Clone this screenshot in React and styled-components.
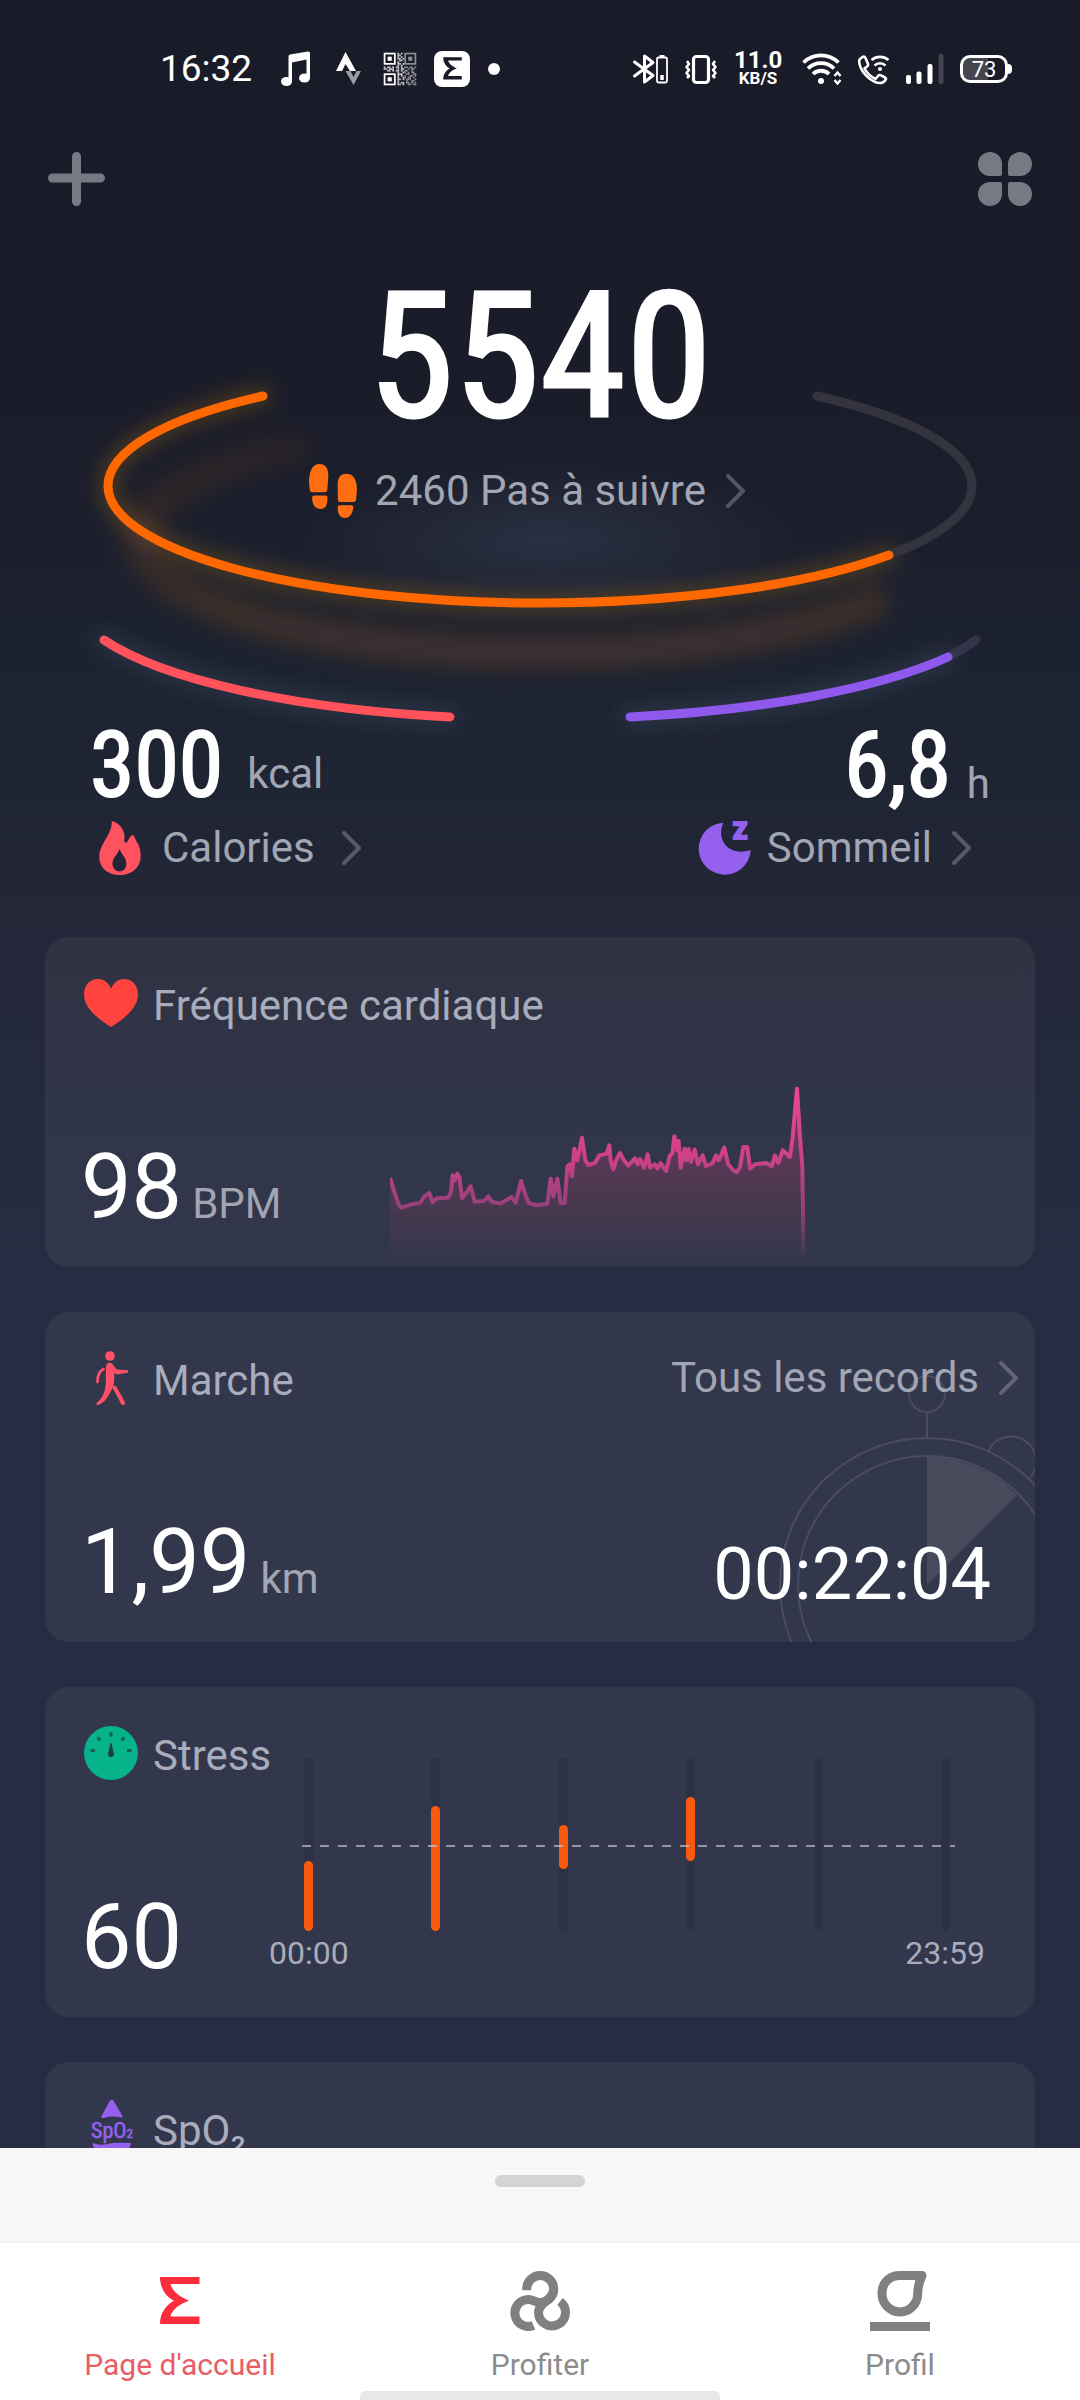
import React from "react";
import styled, { createGlobalStyle } from "styled-components";

const GlobalStyle = createGlobalStyle`
  * {
    box-sizing: border-box;
  }

  body {
    margin: 0;
    background: #282c43;
    font-family: Roboto, "Noto Sans", sans-serif;
    color: #fff;
  }

  svg {
    display: block;
    flex-shrink: 0;
  }

  a {
    color: inherit;
    text-decoration: none;
  }
`;

const Screen = styled.div`
  display: flex;
  flex-direction: column;
  height: 100vh;
  background: linear-gradient(
    #1a1b28 0px,
    #1a1c29 400px,
    #1d2331 700px,
    #232738 920px,
    #272c42 1250px,
    #282c43 100%
  );
`;

const Content = styled.main`
  flex: 1;
  min-height: 0;
  overflow: hidden;
`;

/* status bar */

const StatusBar = styled.header`
  display: flex;
  justify-content: space-between;
  align-items: center;
  height: 138px;
  padding: 0 68px 0 160px;
`;

const StatusGroup = styled.div`
  display: flex;
  align-items: center;
  gap: 16px;
`;

const Clock = styled.time`
  width: 102px;
  font-size: 37px;
  line-height: 38px;
`;

const Speed = styled.div`
  width: 52px;
  padding-right: 4px;
  text-align: center;
  font-size: 24px;
  font-weight: 700;
  line-height: 18px;

  small {
    display: block;
    font-size: 17px;
  }
`;

const Battery = styled.div`
  display: flex;
  align-items: center;
  width: 52px;

  &::after {
    content: "";
    width: 4px;
    height: 10px;
    border-radius: 0 4px 4px 0;
    background: #fff;
  }
`;

const BatteryLevel = styled.span`
  width: 48px;
  height: 28px;
  border: 3px solid #fff;
  border-radius: 10px;
  background: linear-gradient(90deg, #45454d 60%, transparent 60%);
  font-size: 22px;
  line-height: 23px;
  text-align: center;
`;

/* toolbar */

const Toolbar = styled.div`
  display: flex;
  justify-content: space-between;
  padding: 14px 48px 0;
`;

const IconButton = styled.button`
  padding: 0;
  border: none;
  background: none;
  color: #777985;
  cursor: pointer;
`;

/* steps, calories, sleep */

const Hero = styled.section`
  display: grid;
  margin-bottom: 62px;

  > * {
    grid-area: 1 / 1;
  }
`;

const Rings = styled.svg`
  width: 100%;
  height: auto;
`;

const HeroText = styled.div`
  display: flex;
  flex-direction: column;
  align-items: center;
  padding-top: 64px;
`;

const Steps = styled.h1`
  margin: 0 0 20px;
  font-family: "Roboto Condensed", Roboto, sans-serif;
  font-size: 174px;
  font-weight: 400;
  line-height: 174px;
  -webkit-text-stroke: 3px #fff;
`;

const StepsLeft = styled.div`
  padding-right: 28px;
`;

const Metrics = styled.div`
  display: flex;
  justify-content: space-between;
  align-self: stretch;
  margin-top: 203px;
  padding: 0 90px;
`;

const Metric = styled.div`
  display: flex;
  flex-direction: column;
  gap: 10px;

  > a {
    padding: ${(p) => (p.$right ? "0 18px 0 0" : "0 0 0 3px")};
  }
`;

const MetricValue = styled.div`
  display: flex;
  align-items: flex-end;
  justify-content: ${(p) => (p.$right ? "flex-end" : "flex-start")};
  gap: ${(p) => (p.$right ? "16px" : "24px")};
  height: 90px;
`;

const MetricNumber = styled.strong`
  font-family: "Roboto Condensed", Roboto, sans-serif;
  font-size: 90px;
  font-weight: 400;
  line-height: 90px;
  -webkit-text-stroke: 2px #fff;
`;

const Unit = styled.span`
  padding-bottom: ${(p) => (p.$raised ? "10px" : "0")};
  color: #a2a5b2;
  font-size: 42px;
  line-height: 54px;
`;

const Label = styled.a`
  display: flex;
  align-items: center;
  gap: 15px;
  color: #a2a5b2;
  font-size: 42px;
  line-height: 54px;
  white-space: nowrap;
`;

const ChevronSvg = styled.svg`
  margin-left: ${(p) => (p.$wide ? "12px" : "5px")};
`;

/* cards */

const Cards = styled.section`
  display: flex;
  flex-direction: column;
  gap: 45px;
  padding: 0 45px;
`;

const Card = styled.article`
  position: relative;
  display: flex;
  flex-direction: ${(p) => (p.$row ? "row" : "column")};
  justify-content: space-between;
  min-height: 330px;
  padding: 38px 16px 34px 38px;
  border-radius: 24px;
  background: rgba(255, 255, 255, 0.055);
  overflow: hidden;
`;

const Side = styled.div`
  display: flex;
  flex-direction: column;
  justify-content: space-between;
  width: 186px;
`;

const CardHead = styled.div`
  position: relative;
  display: flex;
  justify-content: space-between;
  align-items: center;
  height: 56px;
`;

const CardTitle = styled.h2`
  display: flex;
  align-items: center;
  gap: 14px;
  height: 56px;
  margin: 0;
  color: #a9acbb;
  font-size: 42px;
  font-weight: 400;
  line-height: 56px;
  white-space: nowrap;

  span {
    padding-top: 6px;
  }
`;

const CardFoot = styled.div`
  position: relative;
  display: flex;
  justify-content: space-between;
  align-items: flex-end;
`;

const Value = styled.div`
  display: flex;
  align-items: baseline;
  gap: 10px;
  margin-left: -2px;
  font-size: 90px;
  line-height: 90px;
`;

const Duration = styled.time`
  margin-right: 28px;
  font-size: 72px;
  line-height: 66px;
`;

const HeartChart = styled.svg`
  width: 416px;
  height: 185px;
  margin: 0 213px -34px 0;
`;

const Stopwatch = styled.svg`
  position: absolute;
  right: 0;
  bottom: 0;
`;

const StressChart = styled.div`
  flex: 1;
  display: flex;
  flex-direction: column;
  gap: 6px;
  padding: 33px 34px 0 0;
  color: #a9acbb;
  font-size: 32px;
  line-height: 32px;
`;

const Plot = styled.div`
  position: relative;
  display: flex;
  justify-content: space-between;
  height: 173px;
  padding: 0 35px;

  &::after {
    content: "";
    position: absolute;
    left: 33px;
    right: 30px;
    top: 87px;
    height: 2px;
    background: repeating-linear-gradient(
      90deg,
      rgba(190, 194, 208, 0.7) 0 9px,
      transparent 9px 18px
    );
  }
`;

const Track = styled.div`
  width: 9px;
  border-radius: 5px;
  background: #2c3143;
`;

const Bar = styled.div`
  width: 9px;
  border-radius: 5px;
  background: #fa5a0f;
`;

const Axis = styled.div`
  display: flex;
  justify-content: space-between;
`;

/* bottom sheet and tabs */

const Sheet = styled.div`
  display: flex;
  justify-content: center;
  height: 95px;
  padding-top: 27px;
  background: #f7f7f7;
  border-bottom: 2px solid #f3f3f3;
`;

const Handle = styled.span`
  width: 90px;
  height: 12px;
  border-radius: 6px;
  background: #d4d4d4;
`;

const Tabs = styled.nav`
  position: relative;
  display: grid;
  grid-template-columns: repeat(3, 1fr);
  height: 157px;
  padding-top: 28px;
  background: #fff;

  &::after {
    content: "";
    position: absolute;
    left: calc(100% / 3);
    right: calc(100% / 3);
    bottom: 0;
    height: 9px;
    border-radius: 5px 5px 0 0;
    background: #e8e8e8;
  }
`;

const Tab = styled.a`
  display: flex;
  flex-direction: column;
  align-items: center;
  gap: 16px;
  color: ${(p) => (p.$active ? "#e85d66" : "#8c8c8c")};
  font-size: 30px;
  line-height: 36px;
`;

const Chevron = ({ wide }) => (
  <ChevronSvg $wide={wide} width="20" height="36" viewBox="0 0 20 36">
    <path
      d="M2 3 L17 18 L2 33"
      fill="none"
      stroke="rgba(165, 168, 180, 0.4)"
      strokeWidth="4"
      strokeLinecap="round"
      strokeLinejoin="round"
    />
  </ChevronSvg>
);

const zeppPath =
  "M10 6H49.500V13H20.500C22 20 30 26 39 29.700C30 33 22 38 20.500 45.500H49.500V53H10C10 42 16 34 24 29.700C16 26 10 17 10 6Z";

const MusicIcon = () => (
  <svg width="36" height="36" viewBox="0 0 36 36" fill="#fff">
    <path d="M10.500 5.500 Q10.500 4 12 3.600 L30 .5 Q32 .2 32 2 V27 H28.500 V8.500 L14 11.500 V30 H10.500Z" />
    <ellipse cx="8.500" cy="30.500" rx="5.500" ry="4.600" />
    <ellipse cx="26.500" cy="27" rx="5.500" ry="4.600" />
  </svg>
);

const StravaIcon = () => (
  <svg width="36" height="36" viewBox="0 0 36 36">
    <path d="M15.500 20 H20.500 L23.500 26 L26.500 20 H31 L23.500 34Z" fill="#9a9ba3" />
    <path d="M15.500 1 L26 20 H20 L15.500 13 L12 20 H6Z" fill="#fff" />
  </svg>
);

const qrBits = [
  "........#.#........",
  "........##.........",
  "........#.#........",
  "........##.#.......",
  ".........##........",
  "........#..........",
  "........##.#.......",
  "........#.#........",
  "#.##.#.##.#.##.##.#",
  "##.###..#.##..#.##.",
  "..##.#.##.#.##..#..",
  "........#..##.#.##.",
  "........###..##..##",
  "........#.#.#..##.#",
  "........#..##.##.#.",
  "........##.#.###..#",
  "........#....#..##.",
  "........#.##.##.#.#",
  "........##.#..##.##",
];

const QrIcon = () => (
  <svg width="36" height="36" viewBox="-1 -1 21 21">
    {qrBits.map((row, y) =>
      [...row].map(
        (bit, x) =>
          bit === "#" && (
            <rect key={`${x}-${y}`} x={x} y={y} width="1" height="1" fill={x > 11 ? "#8d8e96" : "#c9cad0"} />
          )
      )
    )}
    {[
      [0, 0, "#fff"],
      [12, 0, "#8d8e96"],
      [0, 12, "#fff"],
    ].map(([x, y, color]) => (
      <g key={`${x}${y}`}>
        <rect x={x + 0.5} y={y + 0.5} width="6" height="6" fill="#1a1b28" stroke={color} />
        <rect x={x + 2.3} y={y + 2.3} width="2.400" height="2.400" fill={color} />
      </g>
    ))}
  </svg>
);

const ZeppBadge = () => (
  <svg width="36" height="36" viewBox="0 0 36 36">
    <rect width="36" height="36" rx="8" fill="#fff" />
    <path d={zeppPath} fill="#1a1b28" transform="translate(4.500 3.500) scale(.47)" />
  </svg>
);

const Dot = () => (
  <svg width="16" height="16" viewBox="0 0 16 16">
    <circle cx="8" cy="8" r="6" fill="#fff" />
  </svg>
);

const BluetoothIcon = () => (
  <svg width="36" height="32" viewBox="0 0 36 32" fill="none" stroke="#fff">
    <path d="M2.500 9 L21 22.500 L12.500 29 V3 L21 9.500 L2.500 23" strokeWidth="3" strokeLinejoin="round" strokeLinecap="round" />
    <rect x="25" y="4.500" width="10" height="25" rx="1.500" strokeWidth="1.800" />
    <path d="M27.500 3 H32.500" strokeWidth="2" />
    <path d="M30 22 V27" strokeWidth="3.500" />
  </svg>
);

const VibrateIcon = () => (
  <svg width="34" height="32" viewBox="0 0 34 32" fill="none" stroke="#fff">
    <rect x="9.500" y="3.500" width="15" height="26" rx="3" strokeWidth="3.200" />
    <path
      d="M3 8 L5 11 L2.500 14 L5 17 L2.500 20 L5 23 L3 25 M31 8 L29 11 L31.500 14 L29 17 L31.500 20 L29 23 L31 25"
      strokeWidth="2.600"
      strokeLinejoin="round"
    />
  </svg>
);

const WifiIcon = () => (
  <svg width="40" height="32" viewBox="0 0 40 32" fill="none" stroke="#fff">
    <path d="M1.500 9.500 A25 25 0 0 1 36.500 9.500" strokeWidth="3.800" />
    <path d="M6 15.500 A18.500 18.500 0 0 1 32 15.500" strokeWidth="3.800" />
    <path d="M11 21 A11.500 11.500 0 0 1 27 21" strokeWidth="3.800" />
    <circle cx="19" cy="28" r="3" fill="#fff" stroke="none" />
    <path d="M32.500 23 L35.500 19.500 L38.500 23 M32.500 27 L35.500 30.500 L38.500 27" strokeWidth="2.400" />
  </svg>
);

const CallIcon = () => (
  <svg width="32" height="32" viewBox="0 0 32 32" fill="none" stroke="#fff" strokeLinejoin="round">
    <path
      d="M2 6 L4.500 4 Q6.500 3 7.500 5 L10 11 Q10.500 12.500 9 13.500 L6.500 15.500 Q10 22 17.500 26 L20 23 Q21.500 21.500 23 22.300 L27 24.500 Q28.500 25.500 27.500 27 L25.500 29 Q20 32 12 26 Q2 18 1.200 9 Q1 7 2 6Z"
      strokeWidth="2.600"
    />
    <path d="M13.500 7 A13 13 0 0 1 30.500 7 M16.500 12.500 A8 8 0 0 1 27.500 12.500" strokeWidth="2.600" />
    <circle cx="22" cy="16" r="2" fill="#fff" stroke="none" />
  </svg>
);

const SignalIcon = () => (
  <svg width="38" height="32" viewBox="0 0 38 32" fill="#fff">
    <rect x="0" y="22" width="5" height="9" rx="2" />
    <rect x="10.500" y="18.500" width="5" height="12.500" rx="2" />
    <rect x="21.500" y="11" width="5" height="20" rx="2" />
    <rect x="32.500" y="1" width="5" height="30" rx="2" fill="#45454f" />
  </svg>
);

const petal = "M12 0A12 12 0 0 1 24 12V22Q24 24 22 24H12A12 12 0 0 1 12 0Z";

const CloverIcon = () => (
  <svg width="54" height="54" viewBox="0 0 54 54" fill="currentColor">
    <path d={petal} />
    <path d={petal} transform="translate(54 0) scale(-1 1)" />
    <path d={petal} transform="translate(0 54) scale(1 -1)" />
    <path d={petal} transform="translate(54 54) scale(-1 -1)" />
  </svg>
);

const FeetIcon = () => (
  <svg width="54" height="54" viewBox="-3 0 54 54" fill="#ff6d12">
    <path d="M0 19C0 8 3 0 10.500 0C17 0 19.500 5 19.300 12L18.300 26Q18 28.300 16 28.300H3.500Q1 28.300 .8 26Z" />
    <path d="M3 34Q3 31.500 5 31.500H16.500Q18.500 31.500 18.500 33.500C18.500 40 17 45 12 45C6 45 3.500 41 3 34Z" />
    <path d="M28.700 22C28.500 14 31 9.700 37.500 9.700C45 9.700 48 17 48 26L47 36Q46.700 38 44.500 38H31Q29 38 28.800 36Z" />
    <path d="M28.700 43.500Q28.700 41.300 30.700 41.300H42.500Q44.500 41.300 44.300 43.500C43.800 49 41 54 36 54C31 54 28.700 50 28.700 43.500Z" />
  </svg>
);

const FlameIcon = () => (
  <svg width="54" height="54" viewBox="0 0 54 54">
    <path
      fillRule="evenodd"
      fill="#ff525f"
      d="M18.700 0C27 2.500 32 9 31.500 17C31.300 20 31 21.500 32.500 21.700C35.500 22 35.500 15.500 39.500 14C41.500 14.500 42 18 44.500 22C47 26 47.700 30 47.700 35C47.700 47 38 54 27 54C15 54 6.300 47 6.300 36C6.300 22 19.500 14 18.700 0ZM26.700 28C24.500 34 19.500 36.500 19.500 42.500C19.500 47 22 50.300 26.500 50.300C31 50.300 33.300 47 33.300 42.500C33.300 36.500 28.500 34 26.700 28Z"
    />
  </svg>
);

const MoonIcon = () => (
  <svg width="54" height="54" viewBox="0 0 54 54" fill="#9660ee" overflow="visible">
    <path d="M25.500 1.700A26 26 0 1 0 52.700 29C43 32.500 33 30.500 27.500 24C22 17.500 22 8.500 25.500 1.700Z" />
    <text
      x="35"
      y="18"
      fontSize="23"
      fontWeight="900"
      fontFamily="Roboto, sans-serif"
      stroke="#9660ee"
      strokeWidth="2"
    >
      Z
    </text>
  </svg>
);

const HeartIcon = () => (
  <svg width="56" height="56" viewBox="0 0 56 56">
    <path
      d="M28 52C17 45 1 34 1 19.500C1 10 7 4 15 4C21 4 26 8 28 14C30 8 35 4 41 4C49 4 55 10 55 19.500C55 34 39 45 28 52Z"
      fill="#ff443f"
    />
  </svg>
);

const WalkIcon = () => (
  <svg width="56" height="56" viewBox="0 0 56 56" fill="#ff5068" stroke="#ff5068" strokeLinecap="round" strokeLinejoin="round">
    <circle cx="27" cy="6" r="4.800" stroke="none" />
    <path
      stroke="none"
      d="M23.500 14.500Q26 11.500 29.500 14L33.500 19.500L44.500 20.300Q46.500 21.500 44.500 22.700L34 24.500L31 23C32 31 31 36 27 43C23.500 49 20 54 14.500 55Q12.500 54.500 14 52.500C18.500 49 20.500 45 22 39C23.500 32 22.500 25 23 18Z"
    />
    <path d="M20.500 19C16.500 21 14.500 26 14.500 32" fill="none" strokeWidth="2.800" />
    <path d="M31.500 37.500L35.500 44.500L40 53" fill="none" strokeWidth="4" />
  </svg>
);

const StressIcon = () => (
  <svg width="56" height="56" viewBox="0 0 56 56">
    <circle cx="28" cy="28" r="27" fill="#07b38b" />
    <path
      d="M28 7V11.500M14.500 12.500L17.500 15.500M41.500 12.500L38.500 15.500M7.500 25.500H12M44 25.500H48.500"
      stroke="#12604f"
      strokeWidth="3"
    />
    <path d="M27.500 18H28.500L31 29A3 3 0 0 1 25 29Z" fill="#1f3f47" />
  </svg>
);

const OxygenIcon = () => (
  <svg width="56" height="56" viewBox="0 0 56 56" fill="#9660ee">
    <path d="M26.500 1.500Q28.800 -2 31 1.500L39.500 16Q40 18 37 17.300Q28 15.500 21 18Q17.500 18.500 18.500 16Z" />
    <text
      x="8"
      y="38"
      fontSize="22"
      fontFamily='"Roboto Condensed", Roboto, sans-serif'
      stroke="#9660ee"
      strokeWidth=".6"
    >
      SpO<tspan fontSize="13">2</tspan>
    </text>
    <path d="M9.500 43Q17 46 24 44T48 43C47 52 38 58 29 58S10 52 9.500 43Z" />
  </svg>
);

const ZeppIcon = () => (
  <svg width="60" height="60" viewBox="0 0 60 60">
    <path d={zeppPath} fill="#fb2c3c" />
  </svg>
);

const EnjoyIcon = () => (
  <svg width="60" height="60" viewBox="0 0 60 60" fill="none" stroke="#808080" strokeWidth="9">
    <path d="M16.700 19.300V18A13.500 13.500 0 0 1 43.700 18C43.700 30 28.500 30 28.500 42A13.500 13.500 0 1 0 50 30.500" />
    <path d="M23.500 54.500A13.500 13.500 0 1 1 18.400 28.500C23 28.500 25 31.500 30.200 31.500A13.500 13.500 0 0 0 43.700 18" />
  </svg>
);

const ProfileIcon = () => (
  <svg width="60" height="60" viewBox="0 0 60 60">
    <path
      d="M30 4.500H52C49 11 47.700 15 47.700 23A17.700 18 0 1 1 12 22.500C12 11 20 4.500 30 4.500Z"
      fill="none"
      stroke="#808080"
      strokeWidth="9"
      strokeLinejoin="round"
    />
    <rect y="51" width="60" height="9" fill="#808080" />
  </svg>
);

const heartRate =
  "150,353 160,385 175,430 183,442 215,432 240,428 252,410 262,402 268,398 278,426 290,414 325,412 333,395 338,345 344,360 352,340 358,350 366,414 378,398 392,378 404,424 432,422 445,408 455,424 480,430 515,410 527,428 543,362 552,392 566,428 590,435 622,430 632,355 640,408 652,355 662,428 674,428 682,318 690,312 696,348 703,265 712,300 726,232 736,300 745,314 765,308 778,285 800,280 808,255 812,300 820,328 828,300 840,278 852,300 865,316 885,294 893,312 900,296 912,322 923,282 930,322 945,312 952,325 962,308 978,332 990,285 997,280 1003,228 1012,270 1016,242 1022,322 1034,265 1040,300 1046,266 1053,305 1064,268 1074,312 1088,285 1098,318 1118,308 1128,285 1136,300 1153,262 1164,310 1178,328 1190,336 1200,320 1210,260 1222,260 1230,325 1245,312 1280,308 1295,318 1305,285 1315,308 1328,270 1350,290 1358,230 1371,85 1380,230 1387,320 1391,600";

// [top, height] of each bar inside the 173px track
const stress = [
  [103, 70],
  [48, 125],
  [67, 44],
  [39, 64],
  [0, 0],
  [0, 0],
];

const tabs = [
  { label: "Page d'accueil", href: "#accueil", icon: <ZeppIcon />, active: true },
  { label: "Profiter", href: "#profiter", icon: <EnjoyIcon /> },
  { label: "Profil", href: "#profil", icon: <ProfileIcon /> },
];

const stepsArc = "M263 396A432 117 0 0 0 108 486A432 117 0 0 0 540 603A432 117 0 0 0 889 555";
const shadowArc = "M293 447A400 115 0 0 0 140 538A400 115 0 0 0 540 653A400 115 0 0 0 873 602";
const caloriesArc = "M104 640A470 126 0 0 0 450 717";
const sleepArc = "M630 717A470 126 0 0 0 948 657";

const ActivityRings = () => (
  <Rings viewBox="0 206 1080 560" fill="none" strokeLinecap="round" strokeWidth="9">
    <defs>
      <radialGradient id="halo">
        <stop offset="0" stopColor="#2a3042" />
        <stop offset="1" stopColor="#2a3042" stopOpacity="0" />
      </radialGradient>
      <linearGradient id="shadow" gradientUnits="userSpaceOnUse" x1="0" y1="430" x2="0" y2="620">
        <stop offset="0" stopColor="#ff7a2a" stopOpacity=".05" />
        <stop offset="1" stopColor="#ff8020" stopOpacity=".14" />
      </linearGradient>
      <filter id="soft" x="-20%" y="-30%" width="140%" height="160%">
        <feGaussianBlur stdDeviation="10" />
      </filter>
    </defs>
    <ellipse cx="550" cy="540" rx="250" ry="80" fill="url(#halo)" />
    <g filter="url(#soft)">
      <path d={shadowArc} stroke="url(#shadow)" strokeWidth="34" />
      <path d={stepsArc} stroke="#ff9a10" strokeOpacity=".25" strokeWidth="16" />
      <path d={caloriesArc} stroke="#4a5a70" strokeOpacity=".3" strokeWidth="20" />
      <path d={sleepArc} stroke="#4a5a70" strokeOpacity=".3" strokeWidth="20" />
    </g>
    <path d="M889 555A432 117 0 0 0 972 486A432 117 0 0 0 817 396" stroke="#33343f" />
    <path d={stepsArc} stroke="#ff6700" />
    <path d="M948 657Q965 648 976 640" stroke="#33364a" />
    <path d={caloriesArc} stroke="#ff525a" />
    <path d={sleepArc} stroke="#9059ee" />
  </Rings>
);

const App = () => {
  return (
    <Screen>
      <GlobalStyle />
      <Content>
        <StatusBar>
          <StatusGroup>
            <Clock>16:32</Clock>
            <MusicIcon />
            <StravaIcon />
            <QrIcon />
            <ZeppBadge />
            <Dot />
          </StatusGroup>
          <StatusGroup>
            <BluetoothIcon />
            <VibrateIcon />
            <Speed>
              11.0<small>KB/S</small>
            </Speed>
            <WifiIcon />
            <CallIcon />
            <SignalIcon />
            <Battery>
              <BatteryLevel>73</BatteryLevel>
            </Battery>
          </StatusGroup>
        </StatusBar>

        <Toolbar>
          <IconButton aria-label="Ajouter">
            <svg width="57" height="54" viewBox="0 0 57 54">
              <path d="M28.500 4.500V49.500M4.500 26H52.500" stroke="currentColor" strokeWidth="9" strokeLinecap="round" />
            </svg>
          </IconButton>
          <IconButton aria-label="Menu">
            <CloverIcon />
          </IconButton>
        </Toolbar>

        <Hero>
          <ActivityRings />
          <HeroText>
            <Steps>5540</Steps>
            <StepsLeft>
              <Label href="#pas">
                <FeetIcon />
                2460 Pas à suivre
                <Chevron />
              </Label>
            </StepsLeft>
            <Metrics>
              <Metric>
                <MetricValue>
                  <MetricNumber>300</MetricNumber>
                  <Unit $raised>kcal</Unit>
                </MetricValue>
                <Label href="#calories">
                  <FlameIcon />
                  Calories
                  <Chevron wide />
                </Label>
              </Metric>
              <Metric $right>
                <MetricValue $right>
                  <MetricNumber>6,8</MetricNumber>
                  <Unit>h</Unit>
                </MetricValue>
                <Label href="#sommeil">
                  <MoonIcon />
                  Sommeil
                  <Chevron />
                </Label>
              </Metric>
            </Metrics>
          </HeroText>
        </Hero>

        <Cards>
          <Card>
            <CardHead>
              <CardTitle>
                <HeartIcon />
                <span>Fréquence cardiaque</span>
              </CardTitle>
            </CardHead>
            <CardFoot>
              <Value>
                98<Unit>BPM</Unit>
              </Value>
              <HeartChart viewBox="150 65 1248 555">
                <defs>
                  <linearGradient id="pulse" gradientUnits="userSpaceOnUse" x1="0" y1="85" x2="0" y2="600">
                    <stop offset="0" stopColor="#ea4690" />
                    <stop offset=".4" stopColor="#cc4287" />
                    <stop offset=".7" stopColor="#94407a" />
                    <stop offset="1" stopColor="#94407a" stopOpacity="0" />
                  </linearGradient>
                  <linearGradient id="pulseFill" gradientUnits="userSpaceOnUse" x1="0" y1="200" x2="0" y2="620">
                    <stop offset="0" stopColor="#a03c70" stopOpacity=".5" />
                    <stop offset=".6" stopColor="#7a3c55" stopOpacity=".28" />
                    <stop offset="1" stopColor="#7a3c55" stopOpacity="0" />
                  </linearGradient>
                </defs>
                <polygon points={`150,620 ${heartRate} 1391,620`} fill="url(#pulseFill)" />
                <polyline points={heartRate} fill="none" stroke="url(#pulse)" strokeWidth="12" strokeLinejoin="round" />
              </HeartChart>
            </CardFoot>
          </Card>

          <Card>
            <Stopwatch width="260" height="270" viewBox="775 1372 260 270" fill="none" stroke="#4a4d62" strokeWidth="2">
              <path d="M927 1585V1457A128 128 0 0 1 1017 1495Z" fill="#474b5b" stroke="none" />
              <circle cx="927" cy="1585" r="147" />
              <circle cx="927" cy="1585" r="129" />
              <circle cx="927" cy="1394" r="18" />
              <path d="M927 1412V1438" />
              <path d="M988 1452A25 25 0 1 1 1028 1480" />
            </Stopwatch>
            <CardHead>
              <CardTitle>
                <WalkIcon />
                <span>Marche</span>
              </CardTitle>
              <Label href="#records">
                Tous les records
                <Chevron />
              </Label>
            </CardHead>
            <CardFoot>
              <Value>
                1,99<Unit>km</Unit>
              </Value>
              <Duration>00:22:04</Duration>
            </CardFoot>
          </Card>

          <Card $row>
            <Side>
              <CardTitle>
                <StressIcon />
                <span>Stress</span>
              </CardTitle>
              <Value>60</Value>
            </Side>
            <StressChart>
              <Plot>
                {stress.map(([top, height], i) => (
                  <Track key={i}>
                    <Bar style={{ height, transform: `translateY(${top}px)` }} />
                  </Track>
                ))}
              </Plot>
              <Axis>
                <span>00:00</span>
                <span>23:59</span>
              </Axis>
            </StressChart>
          </Card>

          <Card>
            <CardHead>
              <CardTitle>
                <OxygenIcon />
                <span>SpO₂</span>
              </CardTitle>
            </CardHead>
          </Card>
        </Cards>
      </Content>

      <Sheet>
        <Handle />
      </Sheet>
      <Tabs>
        {tabs.map((tab) => (
          <Tab key={tab.label} href={tab.href} $active={tab.active}>
            {tab.icon}
            {tab.label}
          </Tab>
        ))}
      </Tabs>
    </Screen>
  );
};

export default App;
